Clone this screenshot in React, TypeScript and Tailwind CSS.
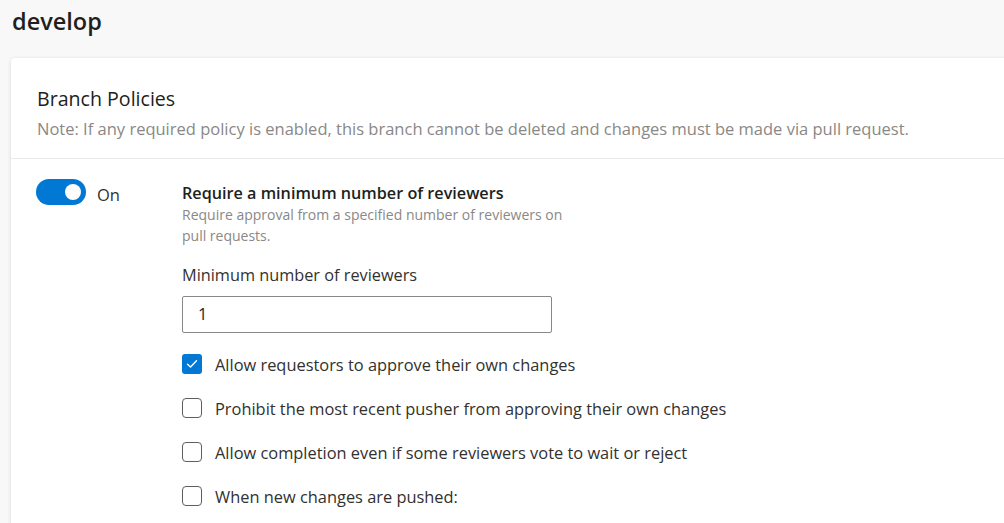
import React from "react";

const font = { fontFamily: '"Segoe UI", "Open Sans", "Noto Sans", sans-serif' };

function Box({ checked, label }: { checked?: boolean; label: string }) {
  return (
    <div className="flex items-center h-[20px]">
      {checked ? (
        <div className="w-[20px] h-[20px] rounded-[3px] bg-[#0078d4] flex items-center justify-center">
          <svg width="12" height="10" viewBox="0 0 12 10" fill="none">
            <path d="M1.5 5.2 L4.5 8 L10.5 1.8" stroke="white" strokeWidth="1.4" strokeLinecap="round" strokeLinejoin="round" />
          </svg>
        </div>
      ) : (
        <div className="w-[20px] h-[20px] rounded-[4px] border border-[#605e5c] bg-white" />
      )}
      <span className="ml-[13px] text-[16.4px] text-[#323130] leading-[20px] pt-[1px]">{label}</span>
    </div>
  );
}

export default function App() {
  return (
    <div className="w-[1004px] h-[523px] bg-[#f8f8f8] overflow-hidden" style={font}>
      <div className="pl-[12px] pt-[5px] h-[58px]">
        <h1 className="text-[23.5px] font-semibold text-[#201f1e] leading-[32px]">develop</h1>
      </div>
      <div className="ml-[11px] w-[1010px] bg-white rounded-[4px] shadow-[0_1px_4px_rgba(0,0,0,0.13)] h-[500px]">
        <div className="pl-[26px] pt-[28px] h-[101px] border-b border-[#eaeaea]">
          <div className="text-[19.6px] text-[#201f1e] leading-[26px]">Branch Policies</div>
          <div className="text-[16.5px] text-[#8a8886] leading-[22px] mt-[6px] whitespace-nowrap">
            Note: If any required policy is enabled, this branch cannot be deleted and changes must be made via pull request.
          </div>
        </div>
        <div className="flex pt-[20px]">
          <div className="pl-[25px] w-[171px] flex items-start">
            <div className="w-[50px] h-[26px] rounded-full bg-[#0078d4] flex items-center justify-end pr-[5px]">
              <div className="w-[16px] h-[16px] rounded-full bg-white" />
            </div>
            <span className="ml-[11px] mt-[3px] text-[16.5px] text-[#323130] leading-[26px]">On</span>
          </div>
          <div className="flex flex-col">
            <div className="text-[16.2px] font-semibold text-[#201f1e] leading-[22px] mt-[3px] whitespace-nowrap">
              Require a minimum number of reviewers
            </div>
            <div className="text-[14px] text-[#8a8886] leading-[21px] w-[395px]">
              Require approval from a specified number of reviewers on pull requests.
            </div>
            <div className="mt-[19px] text-[16.3px] text-[#323130] leading-[20px]">Minimum number of reviewers</div>
            <div className="mt-[11px] w-[370px] h-[37px] border border-[#8a8886] rounded-[2px] flex items-center pl-[15px] text-[16.4px] text-[#201f1e]">
              1
            </div>
            <div className="mt-[21px] flex flex-col gap-[24px]">
              <Box checked label="Allow requestors to approve their own changes" />
              <Box label="Prohibit the most recent pusher from approving their own changes" />
              <Box label="Allow completion even if some reviewers vote to wait or reject" />
              <Box label="When new changes are pushed:" />
            </div>
          </div>
        </div>
      </div>
    </div>
  );
}
